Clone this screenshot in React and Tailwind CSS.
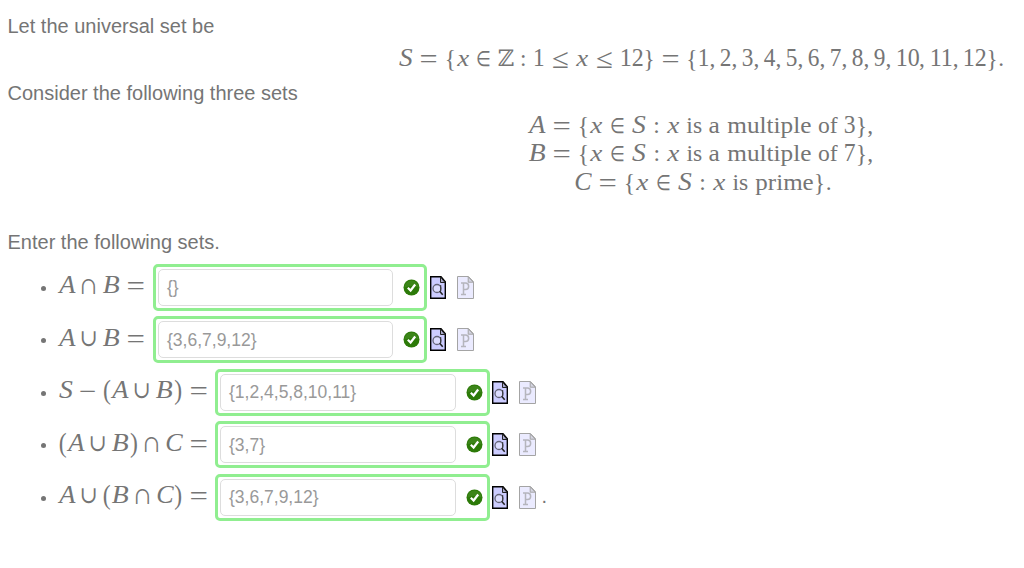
import React from "react";

// Advance width of each symbol, in em, plus any stretch applied to its glyph.
const GLYPHS = {
  S: ["w-[0.645em]", "italic scale-x-[1.17] scale-y-[1.05]"],
  A: ["w-[0.75em]", "italic scale-x-[1.12] scale-y-[1.05]"],
  B: ["w-[0.759em]", "italic scale-x-[1.17] scale-y-[1.03]"],
  C: ["w-[0.76em]", "italic scale-x-[1.1] scale-y-[1.05]"],
  x: ["w-[0.572em]", "italic scale-x-[1.15]"],
  "=": ["w-[1.334em]", "scale-x-[1.38] scale-y-[1.15] translate-y-[0.5px]"],
  "≤": ["w-[1.334em]", "scale-x-[1.32] scale-y-[1.2] translate-y-[0.5px]"],
  "∈": ["w-[1.223em]", "font-['DejaVu_Sans'] font-extralight text-[0.86em] scale-x-[0.85] scale-y-[1.05] -translate-y-[0.5px]"],
  ":": ["w-[0.834em]", ""],
  "ℤ": ["w-[0.667em]", "text-[0.97em]"],
  "∩": ["w-[1.111em]", "scale-x-[1.22] scale-y-[1.25] -translate-y-[1px]"],
  "∪": ["w-[1.111em]", "scale-x-[0.92]"],
  "−": ["w-[1.222em]", "scale-x-[1.3] translate-y-[1px]"],
  "(": ["w-[0.389em]", "scale-y-[1.17]"],
  ")": ["w-[0.389em]", "scale-y-[1.17]"],
  "{": ["w-[0.5em]", "scale-y-[1.1]"],
  "}": ["w-[0.5em]", "scale-y-[1.1]"],
  ",": ["w-[0.445em] justify-start!", ""],
  ".": ["w-[0.278em]", ""],
  is: ["w-[0.672em] ml-[0.27em]", ""],
  a: ["w-[0.5em] ml-[0.27em]", "scale-x-[1.08]"],
  multiple: ["w-[3.612em] ml-[0.27em]", "origin-center scale-x-[1.07]"],
  of: ["w-[0.806em] ml-[0.27em] mr-[0.27em]", ""],
  prime: ["w-[2.503em] ml-[0.27em]", "origin-center scale-x-[1.06]"],
};

function Formula({ children, className }) {
  return (
    <div className={`flex items-baseline whitespace-nowrap leading-[28px] font-['Liberation_Serif','DejaVu_Serif',serif] ${className}`}>
      {children.split(" ").map((t, i) => {
        const [box, glyph] = GLYPHS[t] || (t.length === 2 ? ["w-[1em]", "scale-x-[1.03] scale-y-[1.05]"] : ["w-[0.5em]", "scale-y-[1.05]"]);
        return (
          <span key={i} className={`flex shrink-0 justify-center ${box}`}>
            <span className={`inline-block ${glyph}`}>{t}</span>
          </span>
        );
      })}
    </div>
  );
}

function Check() {
  return (
    <svg className="size-[17px] shrink-0" viewBox="0 0 17 17">
      <circle cx="8.5" cy="8.5" r="8" fill="#2c7a08" />
      <path d="M1.5 8.5a7 7 0 0 1 14 0q-7-3-14 0" fill="#4b8f2a" opacity=".5" />
      <path d="M4.8 8.8l2.8 2.7 4.6-6" fill="none" stroke="#fff" strokeWidth="2.2" />
    </svg>
  );
}

function PreviewIcon() {
  return (
    <svg className="h-[23px] w-4 shrink-0" viewBox="0 0 16 23">
      <path d="M.7.7H11l4.3 5v16.6H.7z" fill="#ccccff" stroke="#000" strokeWidth="1.4" />
      <path d="M10.5 1v5.5H15z" fill="#aaaacc" stroke="#222" strokeWidth="1" />
      <circle cx="7" cy="12.5" r="4" fill="#dcdcff" stroke="#66667a" strokeWidth="1.3" />
      <path d="M9.7 15.3l3 3.5" stroke="#222" strokeWidth="1.5" />
      <path d="M10.7 9v6" stroke="#333" strokeWidth="1" />
    </svg>
  );
}

function PIcon() {
  return (
    <svg className="h-[23px] w-[17px] shrink-0" viewBox="0 0 17 23">
      <path d="M.5.5h11l5 5.2v16.8H.5z" fill="#ebebff" stroke="#a4a4a4" />
      <path d="M11.2.8v5.4h5z" fill="#d4d4e2" stroke="#a4a4a4" />
      <path d="M4 7h4.5c4.2 0 4.2 6.5 0 6.5H6.5M6.5 7v11.5M4 18.5h5" fill="none" stroke="#b5b5bd" strokeWidth="1.5" />
    </svg>
  );
}

const NARROW = { label: "w-[95px]", box: "w-[274px]", input: "w-[235px]", icons: "pl-[3px]" };
const WIDE = { label: "w-[157px]", box: "w-[275px]", input: "w-[236px]", icons: "pl-[2px]" };

const ROWS = [
  { f: "A ∩ B =", value: "{}", size: NARROW },
  { f: "A ∪ B =", value: "{3,6,7,9,12}", size: NARROW },
  { f: "S − ( A ∪ B ) =", value: "{1,2,4,5,8,10,11}", size: WIDE },
  { f: "( A ∪ B ) ∩ C =", value: "{3,7}", size: WIDE },
  { f: "A ∪ ( B ∩ C ) =", value: "{3,6,7,9,12}", size: WIDE, end: true },
];

function Answer({ f, value, size, end }) {
  return (
    <li className="flex h-[52.5px] items-start">
      <span className="mr-[12px] mt-[22px] size-[5px] shrink-0 rounded-full bg-[#757575]" />
      <div className={`${size.label} shrink-0 pt-[7.5px]`}>
        <Formula className="text-[23.7px]">{f}</Formula>
      </div>
      <div className={`flex h-[47px] shrink-0 items-center rounded-[5px] border-[3px] border-[#90ee90] pl-[2px] ${size.box}`}>
        <div className={`flex h-[37px] items-center rounded-[5px] border border-[#ddd] pl-[8px] text-[17.5px] text-[#999] ${size.input}`}>
          {value}
        </div>
        <div className="ml-[10px]"><Check /></div>
      </div>
      <div className={`flex gap-[11px] pt-[12px] ${size.icons}`}>
        <PreviewIcon />
        <PIcon />
      </div>
      {end && <span className="ml-[5.5px] mt-[10px] text-[20px] leading-[24px]">.</span>}
    </li>
  );
}

export default function App() {
  return (
    <main className="h-[568px] w-[1024px] overflow-hidden bg-white pt-[14px] font-['Liberation_Sans',sans-serif] text-[20px] leading-[24px] text-[#757575]">
      <p className="h-[30px] pl-[7.5px]">Let the universal set be</p>
      <div className="h-[37px] pl-[398.5px]">
        <Formula className="text-[23.3px]">
          {"S = { x ∈ ℤ : 1 ≤ x ≤ 12 } = { 1 , 2 , 3 , 4 , 5 , 6 , 7 , 8 , 9 , 10 , 11 , 12 } ."}
        </Formula>
      </div>
      <p className="h-[30px] pl-[7.5px]">Consider the following three sets</p>
      <div className="ml-[529px] flex h-[119px] w-[348px] flex-col items-center text-[23.6px]">
        <Formula className="h-[28px]">{"A = { x ∈ S : x is a multiple of 3 } ,"}</Formula>
        <Formula className="h-[29px]">{"B = { x ∈ S : x is a multiple of 7 } ,"}</Formula>
        <Formula className="h-[28px]">{"C = { x ∈ S : x is prime } ."}</Formula>
      </div>
      <p className="h-[33.9px] pl-[7.5px]">Enter the following sets.</p>
      <ul className="pl-[41px]">
        {ROWS.map((r) => <Answer key={r.f} {...r} />)}
      </ul>
    </main>
  );
}
